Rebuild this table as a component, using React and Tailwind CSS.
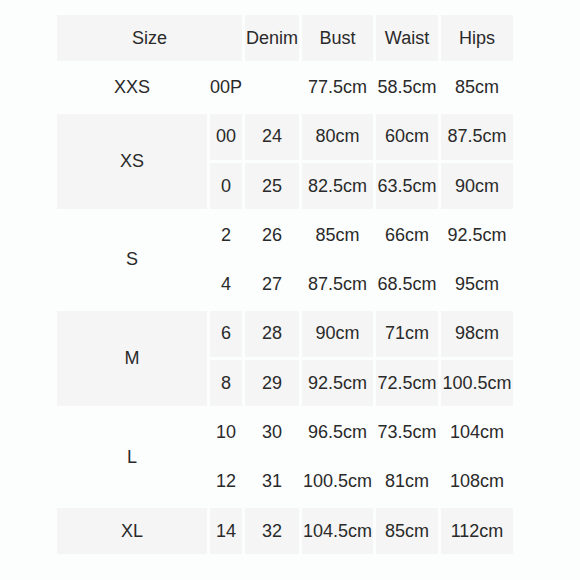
import React from "react";

const groups = [
  { size: "XXS", rows: [["00P", "", "77.5cm", "58.5cm", "85cm"]] },
  {
    size: "XS",
    shade: true,
    rows: [
      ["00", "24", "80cm", "60cm", "87.5cm"],
      ["0", "25", "82.5cm", "63.5cm", "90cm"],
    ],
  },
  {
    size: "S",
    rows: [
      ["2", "26", "85cm", "66cm", "92.5cm"],
      ["4", "27", "87.5cm", "68.5cm", "95cm"],
    ],
  },
  {
    size: "M",
    shade: true,
    rows: [
      ["6", "28", "90cm", "71cm", "98cm"],
      ["8", "29", "92.5cm", "72.5cm", "100.5cm"],
    ],
  },
  {
    size: "L",
    rows: [
      ["10", "30", "96.5cm", "73.5cm", "104cm"],
      ["12", "31", "100.5cm", "81cm", "108cm"],
    ],
  },
  { size: "XL", shade: true, rows: [["14", "32", "104.5cm", "85cm", "112cm"]] },
];

const Cell = ({ shade, className = "", children }) => (
  <div
    className={`flex items-center justify-center whitespace-nowrap ${
      shade ? "bg-[#f5f5f5]" : ""
    } ${className}`}
  >
    {children}
  </div>
);

export default function App() {
  return (
    <div
      className="w-[580px] h-[580px] bg-[#fcfdfd] pt-[14px] pl-[57px] text-[18px] text-[#2a2a2a]"
      style={{ fontFamily: '"Liberation Sans", Arial, sans-serif' }}
    >
      <div className="grid grid-cols-[150px_32px_54px_71px_62px_72px] auto-rows-[46.3px] gap-[3px] w-[456px] pt-px">
        {/* header */}
        <Cell shade className="col-span-2">Size</Cell>
        <Cell shade>Denim</Cell>
        <Cell shade>Bust</Cell>
        <Cell shade>Waist</Cell>
        <Cell shade>Hips</Cell>

        {groups.map((g) => (
          <React.Fragment key={g.size}>
            <Cell
              shade={g.shade}
              className={`col-start-1 ${g.rows.length === 2 ? "row-span-2" : ""}`}
            >
              {g.size}
            </Cell>
            {g.rows.map((r, i) => (
              <React.Fragment key={i}>
                {r.map((v, j) => (
                  <Cell key={j} shade={g.shade} className={j === 0 ? "col-start-2" : ""}>
                    {v}
                  </Cell>
                ))}
              </React.Fragment>
            ))}
          </React.Fragment>
        ))}
      </div>
    </div>
  );
}
